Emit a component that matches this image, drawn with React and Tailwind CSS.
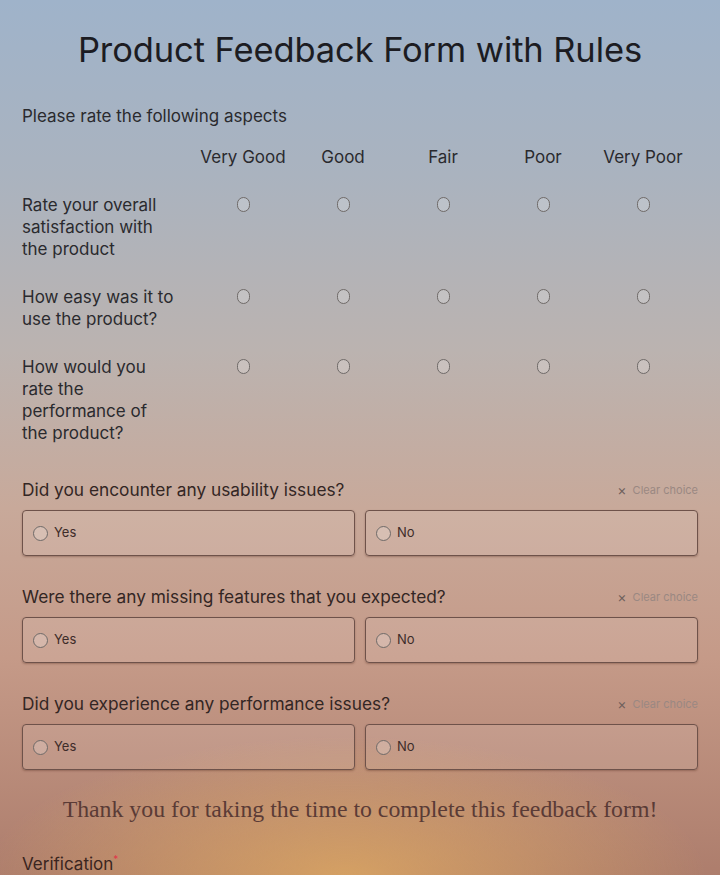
import React from 'react';

const columns = ['Very Good', 'Good', 'Fair', 'Poor', 'Very Poor'];

const aspects = [
  { id: 'satisfaction', label: 'Rate your overall satisfaction with the product' },
  { id: 'ease', label: 'How easy was it to use the product?' },
  { id: 'performance', label: 'How would you rate the performance of the product?' },
];

const questions = [
  { id: 'usability', label: 'Did you encounter any usability issues?' },
  { id: 'features', label: 'Were there any missing features that you expected?' },
  { id: 'perf', label: 'Did you experience any performance issues?' },
];

const Radio = ({ small }) => (
  <span
    className={`inline-block rounded-full border-[1.5px] border-[#6f6a68] bg-white/20 ${
      small ? 'w-[15px] h-[15px]' : 'w-[13px] h-[15px]'
    }`}
  />
);

const ChoiceBox = ({ text }) => (
  <label className="flex-1 h-[46px] flex items-center gap-[6px] pl-[10px] border-[1.5px] border-[#6e524a] rounded-[4px] bg-white/10 shadow-[0_1px_2px_rgba(80,40,30,0.35)]">
    <Radio small />
    <span className="text-[13px] text-[#3d2c29]">{text}</span>
  </label>
);

export default function App() {
  return (
    <div
      className="min-h-[875px] w-full bg-[radial-gradient(ellipse_50%_16%_at_48%_100%,rgba(226,172,96,0.75),transparent),linear-gradient(180deg,#9fb3ca_0%,#aab3bf_20%,#bbb3b0_40%,#c8a99a_58%,#c59a88_75%,#ad7d6c_100%)] text-[#2b2626] font-['Inter','Noto_Sans',sans-serif]"
    >
      <div className="px-[22px] pt-[28px]">
        <h1 className="text-center text-[34.5px] leading-[44px] text-[#1c1c22] tracking-[-0.1px]">
          Product Feedback Form with Rules
        </h1>

        <p className="mt-[33px] text-[17px] leading-[22px] text-[#2a2a2e]">Please rate the following aspects</p>

        <div className="mt-[19px] grid grid-cols-[171px_repeat(5,100px)]">
          <div />
          {columns.map((c) => (
            <div key={c} className="text-center text-[17px] leading-[22px] text-[#2a2a2e]">
              {c}
            </div>
          ))}
        </div>

        <div className="mt-[26px] flex flex-col gap-[26px]">
          {aspects.map((a) => (
            <div key={a.id} className="grid grid-cols-[171px_repeat(5,100px)] items-start">
              <div className="text-[17px] leading-[22px] pr-[18px] text-[#2a2a2e]">{a.label}</div>
              {columns.map((c) => (
                <div key={c} className="flex justify-center pt-[3px]">
                  <Radio />
                </div>
              ))}
            </div>
          ))}
        </div>

        <div className="mt-[34px] flex flex-col gap-[29px]">
          {questions.map((q) => (
            <div key={q.id}>
              <div className="flex items-center justify-between h-[24px]">
                <span className="text-[17.3px] text-[#332624]">{q.label}</span>
                <span className="flex items-center gap-[6px] text-[11px] text-[#9a8882]">
                  <span className="text-[14px] leading-none text-[#6f605c]">×</span>
                  Clear choice
                </span>
              </div>
              <div className="mt-[8px] flex gap-[10px]">
                <ChoiceBox text="Yes" />
                <ChoiceBox text="No" />
              </div>
            </div>
          ))}
        </div>

        <p className="mt-[22px] text-center text-[23.8px] text-[#5a3b36] font-['Liberation_Serif','DejaVu_Serif',serif]">
          Thank you for taking the time to complete this feedback form!
        </p>

        <p className="mt-[24px] text-[17px] text-[#3a2520]">
          Verification<span className="text-[#e0384a] text-[10px] align-top">*</span>
        </p>
      </div>
    </div>
  );
}
